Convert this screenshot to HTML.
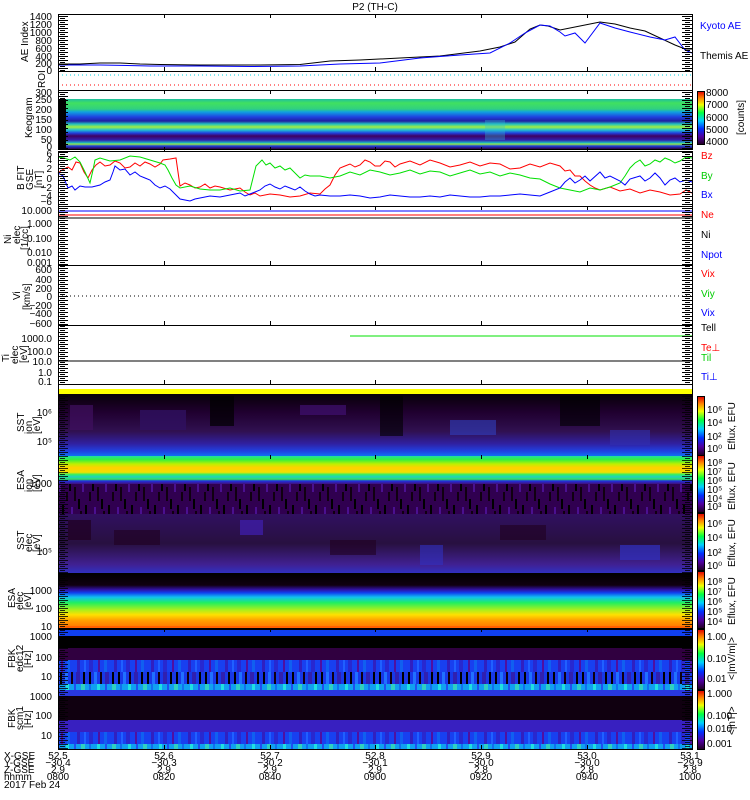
<!DOCTYPE html>
<html><head><meta charset="utf-8">
<style>
html,body{margin:0;padding:0;background:#fff;}
svg{display:block;font-family:"Liberation Sans",sans-serif;}
text{font-size:10px;}
</style></head>
<body>
<svg width="750" height="800" xmlns="http://www.w3.org/2000/svg">
<defs>
<linearGradient id="keo" x1="0" y1="0" x2="0" y2="1">
<stop offset="0" stop-color="#20c0a0"/><stop offset="0.08" stop-color="#40e060"/>
<stop offset="0.2" stop-color="#30d080"/><stop offset="0.26" stop-color="#10a0e0"/>
<stop offset="0.36" stop-color="#2040e0"/><stop offset="0.44" stop-color="#2020a0"/>
<stop offset="0.5" stop-color="#20c0c0"/><stop offset="0.56" stop-color="#a0f040"/>
<stop offset="0.62" stop-color="#20c0d0"/><stop offset="0.68" stop-color="#2040e0"/>
<stop offset="0.74" stop-color="#400060"/><stop offset="0.82" stop-color="#3020b0"/>
<stop offset="0.88" stop-color="#20c0c0"/><stop offset="0.9" stop-color="#a0f040"/>
<stop offset="0.94" stop-color="#2040e0"/><stop offset="1" stop-color="#300040"/>
</linearGradient>
<linearGradient id="esai" x1="0" y1="0" x2="0" y2="1">
<stop offset="0" stop-color="#20e0a0"/><stop offset="0.06" stop-color="#30f040"/>
<stop offset="0.14" stop-color="#c0f000"/><stop offset="0.2" stop-color="#ffd000"/>
<stop offset="0.28" stop-color="#f0e000"/><stop offset="0.32" stop-color="#30f060"/>
<stop offset="0.36" stop-color="#20d0c0"/><stop offset="0.4" stop-color="#30e060"/>
<stop offset="0.43" stop-color="#2030e0"/><stop offset="0.48" stop-color="#401080"/>
<stop offset="1" stop-color="#200030"/>
</linearGradient>
<linearGradient id="esae" x1="0" y1="0" x2="0" y2="1">
<stop offset="0" stop-color="#000"/><stop offset="0.22" stop-color="#100010"/>
<stop offset="0.3" stop-color="#3010a0"/><stop offset="0.36" stop-color="#1040f0"/>
<stop offset="0.44" stop-color="#10c0f0"/><stop offset="0.54" stop-color="#20f060"/>
<stop offset="0.66" stop-color="#a0f020"/><stop offset="0.76" stop-color="#ffe000"/>
<stop offset="0.86" stop-color="#ffa000"/><stop offset="1" stop-color="#ff7000"/>
</linearGradient>
<linearGradient id="sst" x1="0" y1="0" x2="0" y2="1">
<stop offset="0" stop-color="#080008"/><stop offset="0.3" stop-color="#200030"/>
<stop offset="0.6" stop-color="#301050"/><stop offset="0.8" stop-color="#3020a0"/>
<stop offset="0.92" stop-color="#2040e0"/><stop offset="1" stop-color="#1070f0"/>
</linearGradient>
<linearGradient id="sste" x1="0" y1="0" x2="0" y2="1">
<stop offset="0" stop-color="#301060"/><stop offset="0.5" stop-color="#281040"/>
<stop offset="0.85" stop-color="#402090"/><stop offset="1" stop-color="#3030c0"/>
</linearGradient>
<linearGradient id="cb" x1="0" y1="1" x2="0" y2="0">
<stop offset="0" stop-color="#200020"/><stop offset="0.15" stop-color="#5000a0"/>
<stop offset="0.3" stop-color="#0030ff"/><stop offset="0.45" stop-color="#00d0ff"/>
<stop offset="0.6" stop-color="#00ff40"/><stop offset="0.75" stop-color="#f0ff00"/>
<stop offset="0.88" stop-color="#ff8000"/><stop offset="1" stop-color="#e00000"/>
</linearGradient>
<pattern id="tkl" width="10" height="4" patternUnits="userSpaceOnUse">
<rect x="0" y="0" width="10" height="1" fill="#000"/><rect x="0" y="2" width="5" height="1" fill="#000"/>
</pattern>
<pattern id="tkr" width="10" height="4" patternUnits="userSpaceOnUse">
<rect x="0" y="0" width="10" height="1" fill="#000"/><rect x="5" y="2" width="5" height="1" fill="#000"/>
</pattern>
<pattern id="noise" width="23" height="37" patternUnits="userSpaceOnUse">
<rect width="23" height="37" fill="#300050"/>
<rect x="0" y="0" width="2" height="10" fill="#000"/><rect x="5" y="6" width="2" height="14" fill="#100010"/>
<rect x="9" y="18" width="2" height="10" fill="#000"/><rect x="13" y="3" width="2" height="8" fill="#4a1090"/>
<rect x="16" y="24" width="2" height="12" fill="#000"/><rect x="20" y="11" width="2" height="9" fill="#100010"/>
<rect x="2" y="26" width="2" height="8" fill="#4a1090"/><rect x="11" y="30" width="2" height="6" fill="#100010"/>
</pattern>
<pattern id="fbA" width="37" height="12" patternUnits="userSpaceOnUse">
<rect width="37" height="12" fill="#1840f0"/>
<rect x="3" width="3" height="12" fill="#3020c0"/><rect x="10" width="2" height="12" fill="#2060ff"/>
<rect x="15" width="4" height="12" fill="#2828d0"/><rect x="24" width="2" height="12" fill="#5010a0"/>
<rect x="30" width="3" height="12" fill="#1060f0"/>
</pattern>
<pattern id="fbB" width="29" height="12" patternUnits="userSpaceOnUse">
<rect width="29" height="12" fill="#1838e8"/>
<rect x="2" width="2" height="12" fill="#000"/><rect x="7" width="3" height="12" fill="#2070ff"/>
<rect x="13" width="2" height="12" fill="#100010"/><rect x="18" width="4" height="12" fill="#3020b0"/>
<rect x="25" width="2" height="12" fill="#000"/>
</pattern>
<pattern id="fbC" width="31" height="6" patternUnits="userSpaceOnUse">
<rect width="31" height="6" fill="#10a0f0"/>
<rect x="4" width="3" height="6" fill="#20e0e0"/><rect x="12" width="2" height="6" fill="#2050f0"/>
<rect x="19" width="4" height="6" fill="#30d0c0"/><rect x="27" width="2" height="6" fill="#1070f0"/>
</pattern>
</defs>
<text x="375" y="10" text-anchor="middle">P2 (TH-C)</text>

<!-- keogram -->
<rect x="58" y="99" width="634" height="50" fill="url(#keo)"/>
<rect x="58" y="99" width="8" height="50" fill="#000"/>
<rect x="485" y="120" width="20" height="20" fill="#30c0d0" opacity="0.35"/>
<!-- yellow bar -->
<rect x="58" y="389" width="634" height="5" fill="#ffff00"/>
<!-- SST ion -->
<rect x="58" y="394" width="634" height="62" fill="url(#sst)"/>
<rect x="70" y="405" width="23" height="25" fill="#401060" opacity="0.7"/>
<rect x="140" y="410" width="46" height="20" fill="#301060" opacity="0.8"/>
<rect x="210" y="396" width="24" height="30" fill="#000" opacity="0.7"/>
<rect x="300" y="405" width="46" height="10" fill="#401070" opacity="0.7"/>
<rect x="380" y="396" width="23" height="40" fill="#000" opacity="0.6"/>
<rect x="450" y="420" width="46" height="15" fill="#3040c0" opacity="0.6"/>
<rect x="560" y="396" width="40" height="30" fill="#000" opacity="0.6"/>
<rect x="610" y="430" width="40" height="15" fill="#3030b0" opacity="0.6"/>
<!-- ESA ion -->
<rect x="58" y="456" width="634" height="58" fill="url(#esai)"/>
<rect x="58" y="484" width="634" height="30" fill="url(#noise)"/>
<!-- SST elec -->
<rect x="58" y="514" width="634" height="59" fill="url(#sste)"/>
<rect x="68" y="520" width="23" height="20" fill="#200020" opacity="0.7"/>
<rect x="114" y="530" width="46" height="15" fill="#200020" opacity="0.6"/>
<rect x="240" y="520" width="23" height="15" fill="#4020b0" opacity="0.7"/>
<rect x="330" y="540" width="46" height="15" fill="#200020" opacity="0.6"/>
<rect x="420" y="545" width="23" height="20" fill="#3030c0" opacity="0.6"/>
<rect x="500" y="525" width="46" height="15" fill="#200020" opacity="0.6"/>
<rect x="620" y="545" width="40" height="15" fill="#3030c0" opacity="0.7"/>
<!-- ESA elec -->
<rect x="58" y="573" width="634" height="55" fill="url(#esae)"/>
<rect x="58" y="626" width="634" height="2" fill="#ff6000"/>
<!-- FBK edc12 -->
<rect x="58" y="628" width="634" height="62" fill="#000"/>
<rect x="58" y="630" width="634" height="6" fill="#1040f0"/>
<rect x="58" y="648" width="634" height="12" fill="#300040"/>
<rect x="58" y="660" width="634" height="12" fill="url(#fbA)"/>
<rect x="58" y="672" width="634" height="12" fill="url(#fbB)"/>
<rect x="58" y="684" width="634" height="6" fill="url(#fbC)"/>
<!-- FBK scm1 -->
<rect x="58" y="690" width="634" height="60" fill="#100010"/>
<rect x="58" y="690" width="634" height="6" fill="#2838e0"/>
<rect x="58" y="720" width="634" height="12" fill="#3820c0"/>
<rect x="58" y="732" width="634" height="12" fill="url(#fbA)"/>
<rect x="58" y="744" width="634" height="6" fill="url(#fbC)"/>

<!-- lines -->
<polyline fill="none" stroke="#000" points="58,64 80,64 100,63 120,63 140,64 160,64.5 200,65 230,65 260,65 300,64.5 330,61 360,60 400,58 440,56 480,51 500,47 515,42 530,29 540,25 548,26 560,30 580,26 600,22 615,24 630,28 645,31 660,38 675,45 685,49 692,49"/>
<polyline fill="none" stroke="#0000ff" points="58,65 100,65 150,66 200,66 250,66.5 300,66 340,64 380,63 420,58 460,55 490,53 510,43 525,33 540,25 550,26 560,32 565,36 575,33 585,43 600,23 615,28 630,32 650,37 665,40 675,37 685,50 692,53"/>
<line x1="58" y1="75" x2="692" y2="75" stroke="#00d0e0" stroke-dasharray="1 3"/>
<line x1="58" y1="85" x2="692" y2="85" stroke="#ff0000" stroke-dasharray="1 3"/>
<polyline fill="none" stroke="#ff0000" points="58,173 62,170 68,167 72,170 76,162 80,163 84,172 88,178 92,170 96,165 100,162 105,166 110,165 115,161 120,163 125,168 130,167 135,163 140,166 145,162 150,164 155,167 160,164 163,160 170,159 176,158 180,186 185,183 190,185 195,188 200,187 205,184 210,188 215,186 220,187 230,190 240,188 245,192 250,195 255,193 260,196 270,194 280,195 290,197 300,196 310,193 320,194 325,189 330,185 335,175 340,168 345,166 350,164 355,167 360,165 365,160 370,162 375,166 380,166 385,161 390,162 395,167 400,164 410,161 420,165 430,160 440,163 450,167 460,165 470,162 480,166 490,163 500,164 510,169 520,168 530,164 540,167 550,163 560,166 565,171 570,170 575,176 580,176 585,181 590,185 595,188 600,190 610,187 620,191 630,189 640,193 650,190 660,192 670,195 680,194 686,190 692,193"/>
<polyline fill="none" stroke="#00e000" points="58,157 64,158 70,160 75,157 80,162 85,172 90,183 93,170 95,160 100,158 110,161 120,160 130,156 140,157 150,160 160,163 165,165 168,170 172,178 176,185 180,188 190,186 200,189 210,190 220,190 230,188 240,191 250,190 253,178 256,166 262,160 266,165 270,163 275,168 280,166 285,170 290,168 295,173 300,178 305,175 310,176 320,176 330,178 340,176 350,172 360,175 370,170 380,172 390,175 400,173 410,170 420,174 430,171 440,172 450,176 460,173 470,170 480,174 490,172 500,176 510,173 520,175 530,178 540,179 550,184 560,188 570,190 580,192 590,188 600,190 610,187 620,183 625,176 630,168 635,163 640,160 645,166 650,164 655,160 660,162 665,158 670,160 675,163 680,161 686,157 692,158"/>
<polyline fill="none" stroke="#0000ff" points="58,173 63,176 68,188 72,186 75,190 80,186 85,187 92,187 100,185 105,182 110,180 113,172 115,166 120,170 125,169 130,175 135,172 140,176 145,178 150,180 155,185 160,188 165,186 170,189 175,194 180,199 185,200 190,201 195,199 200,198 210,196 220,197 230,195 240,193 245,196 250,194 255,192 260,190 265,186 270,184 275,187 280,189 285,186 290,188 295,190 300,187 305,191 310,194 315,196 320,195 330,196 340,196 350,195 360,196 370,198 380,197 390,195 400,196 410,197 420,197 430,196 440,197 450,195 460,196 470,197 480,197 490,196 500,196 510,195 520,194 530,195 540,196 550,192 560,188 565,182 570,178 575,183 580,180 585,176 590,181 600,172 605,178 610,176 620,181 625,185 630,179 640,176 645,181 650,178 655,173 660,178 665,185 670,180 675,178 680,182 686,180 692,182"/>
<line x1="58" y1="211" x2="692" y2="211" stroke="#0000ff"/>
<line x1="58" y1="215" x2="692" y2="215" stroke="#ff0000"/>
<line x1="58" y1="218" x2="692" y2="218" stroke="#000"/>
<line x1="58" y1="296" x2="692" y2="296" stroke="#000" stroke-dasharray="1 3"/>
<line x1="350" y1="336" x2="692" y2="336" stroke="#00e000"/>
<line x1="58" y1="361" x2="692" y2="361" stroke="#000"/>

<!-- frames -->
<g fill="none" stroke="#000" stroke-width="1">
<rect x="58.5" y="14.5" width="634" height="57"/>
<rect x="58.5" y="71.5" width="634" height="19"/>
<rect x="58.5" y="90.5" width="634" height="59"/>
<rect x="58.5" y="151.5" width="634" height="55"/>
<rect x="58.5" y="206.5" width="634" height="59"/>
<rect x="58.5" y="265.5" width="634" height="60"/>
<rect x="58.5" y="325.5" width="634" height="59"/>
<rect x="58.5" y="384.5" width="634" height="365"/>
</g>
<!-- y ticks -->
<g>
<rect x="58" y="15" width="10" height="56" fill="url(#tkl)"/><rect x="682" y="15" width="10" height="56" fill="url(#tkr)"/>
<rect x="58" y="91" width="10" height="58" fill="url(#tkl)"/><rect x="682" y="91" width="10" height="58" fill="url(#tkr)"/>
<rect x="58" y="152" width="10" height="54" fill="url(#tkl)"/><rect x="682" y="152" width="10" height="54" fill="url(#tkr)"/>
<rect x="58" y="207" width="10" height="58" fill="url(#tkl)"/><rect x="682" y="207" width="10" height="58" fill="url(#tkr)"/>
<rect x="58" y="266" width="10" height="59" fill="url(#tkl)"/><rect x="682" y="266" width="10" height="59" fill="url(#tkr)"/>
<rect x="58" y="326" width="10" height="58" fill="url(#tkl)"/><rect x="682" y="326" width="10" height="58" fill="url(#tkr)"/>
<rect x="58" y="396" width="10" height="353" fill="url(#tkl)" opacity="0.8"/><rect x="682" y="396" width="10" height="353" fill="url(#tkr)" opacity="0.8"/>
</g>
<path stroke="#000" fill="none" d="M164.5 14v4M270.5 14v4M375.5 14v4M481.5 14v4M587.5 14v4M164.5 71v-4M270.5 71v-4M375.5 71v-4M481.5 71v-4M587.5 71v-4M164.5 90v4M270.5 90v4M375.5 90v4M481.5 90v4M587.5 90v4M164.5 151v-4M270.5 151v-4M375.5 151v-4M481.5 151v-4M587.5 151v-4M164.5 206v4M270.5 206v4M375.5 206v4M481.5 206v4M587.5 206v4M164.5 265v-4M270.5 265v-4M375.5 265v-4M481.5 265v-4M587.5 265v-4M164.5 325v-4M270.5 325v-4M375.5 325v-4M481.5 325v-4M587.5 325v-4M164.5 384v-4M270.5 384v-4M375.5 384v-4M481.5 384v-4M587.5 384v-4M164.5 455v4M270.5 455v4M375.5 455v4M481.5 455v4M587.5 455v4M164.5 628v4M270.5 628v4M375.5 628v4M481.5 628v4M587.5 628v4M164.5 749v-4M270.5 749v-4M375.5 749v-4M481.5 749v-4M587.5 749v-4"/>

<!-- colorbars -->
<g stroke="#000" stroke-width="1">
<rect x="697.5" y="91.5" width="7" height="53" fill="url(#cb)"/>
<rect x="697.5" y="396.5" width="7" height="59" fill="url(#cb)"/>
<rect x="697.5" y="455.5" width="7" height="57" fill="url(#cb)"/>
<rect x="697.5" y="513.5" width="7" height="57" fill="url(#cb)"/>
<rect x="697.5" y="571.5" width="7" height="57" fill="url(#cb)"/>
<rect x="697.5" y="629.5" width="7" height="60" fill="url(#cb)"/>
<rect x="697.5" y="690.5" width="7" height="59" fill="url(#cb)"/>
</g>
<!-- left labels -->
<g font-size="10">
<text x="52" y="20" text-anchor="end">1400</text><text x="52" y="28" text-anchor="end">1200</text>
<text x="52" y="36" text-anchor="end">1000</text><text x="52" y="44" text-anchor="end">800</text>
<text x="52" y="52" text-anchor="end">600</text><text x="52" y="60" text-anchor="end">400</text>
<text x="52" y="67" text-anchor="end">200</text><text x="52" y="74" text-anchor="end">0</text>
<text transform="translate(28,62) rotate(-90)">AE Index</text>
<text transform="translate(45,88) rotate(-90)">ROI</text>
<text x="52" y="96" text-anchor="end">300</text><text x="52" y="103" text-anchor="end">250</text>
<text x="52" y="113" text-anchor="end">200</text><text x="52" y="123" text-anchor="end">150</text>
<text x="52" y="133" text-anchor="end">100</text><text x="52" y="143" text-anchor="end">50</text>
<text x="52" y="150" text-anchor="end">0</text>
<text transform="translate(32,138) rotate(-90)">Keogram</text>
<text x="52" y="157" text-anchor="end">6</text><text x="52" y="163" text-anchor="end">4</text>
<text x="52" y="172" text-anchor="end">2</text><text x="52" y="182" text-anchor="end">0</text>
<text x="52" y="191" text-anchor="end">−2</text><text x="52" y="199" text-anchor="end">−4</text>
<text x="52" y="205" text-anchor="end">−6</text>
<text transform="translate(24,190) rotate(-90)" font-size="9">B FIT</text>
<text transform="translate(33,190) rotate(-90)" font-size="8">GSE</text>
<text transform="translate(42,188) rotate(-90)" font-size="9">[nT]</text>
<text x="52" y="214" text-anchor="end">10.000</text><text x="52" y="227" text-anchor="end">1.000</text>
<text x="52" y="242" text-anchor="end">0.100</text><text x="52" y="256" text-anchor="end">0.010</text>
<text x="52" y="266" text-anchor="end">0.001</text>
<text transform="translate(11,244) rotate(-90)" font-size="9">Ni</text>
<text transform="translate(20,244) rotate(-90)" font-size="8">elec</text>
<text transform="translate(28,250) rotate(-90)" font-size="9">[1/cc]</text>
<text x="52" y="273" text-anchor="end">600</text><text x="52" y="283" text-anchor="end">400</text>
<text x="52" y="292" text-anchor="end">200</text><text x="52" y="300" text-anchor="end">0</text>
<text x="52" y="309" text-anchor="end">−200</text><text x="52" y="317" text-anchor="end">−400</text>
<text x="52" y="327" text-anchor="end">−600</text>
<text transform="translate(20,300) rotate(-90)" font-size="9">Vi</text>
<text transform="translate(30,310) rotate(-90)" font-size="9">[km/s]</text>
<text x="52" y="342" text-anchor="end">1000.0</text><text x="52" y="355" text-anchor="end">100.0</text>
<text x="52" y="365" text-anchor="end">10.0</text><text x="52" y="376" text-anchor="end">1.0</text>
<text x="52" y="385" text-anchor="end">0.1</text>
<text transform="translate(9,362) rotate(-90)" font-size="9">Ti</text>
<text transform="translate(18,364) rotate(-90)" font-size="8">elec</text>
<text transform="translate(27,363) rotate(-90)" font-size="9">[eV]</text>
<text x="52" y="416" text-anchor="end">10⁶</text><text x="52" y="445" text-anchor="end">10⁵</text>
<text transform="translate(24,432) rotate(-90)" font-size="9">SST</text>
<text transform="translate(32,434) rotate(-90)" font-size="8">ion</text>
<text transform="translate(40,434) rotate(-90)" font-size="8">[eV]</text>
<text x="52" y="487" text-anchor="end">1000</text>
<text transform="translate(24,490) rotate(-90)" font-size="9">ESA</text>
<text transform="translate(32,492) rotate(-90)" font-size="8">ion</text>
<text transform="translate(40,492) rotate(-90)" font-size="8">[eV]</text>
<text x="52" y="555" text-anchor="end">10⁵</text>
<text transform="translate(24,550) rotate(-90)" font-size="9">SST</text>
<text transform="translate(32,552) rotate(-90)" font-size="8">elec</text>
<text transform="translate(40,552) rotate(-90)" font-size="8">[eV]</text>
<text x="52" y="594" text-anchor="end">1000</text><text x="52" y="612" text-anchor="end">100</text>
<text x="52" y="630" text-anchor="end">10</text>
<text transform="translate(15,608) rotate(-90)" font-size="9">ESA</text>
<text transform="translate(23,610) rotate(-90)" font-size="8">elec</text>
<text transform="translate(31,610) rotate(-90)" font-size="8">[eV]</text>
<text x="52" y="640" text-anchor="end">1000</text><text x="52" y="661" text-anchor="end">100</text>
<text x="52" y="680" text-anchor="end">10</text>
<text transform="translate(15,668) rotate(-90)" font-size="9">FBK</text>
<text transform="translate(23,672) rotate(-90)" font-size="8">edc12</text>
<text transform="translate(31,668) rotate(-90)" font-size="8">[Hz]</text>
<text x="52" y="700" text-anchor="end">1000</text><text x="52" y="719" text-anchor="end">100</text>
<text x="52" y="739" text-anchor="end">10</text>
<text transform="translate(15,728) rotate(-90)" font-size="9">FBK</text>
<text transform="translate(23,730) rotate(-90)" font-size="8">scm1</text>
<text transform="translate(31,728) rotate(-90)" font-size="8">[Hz]</text>
</g>
<!-- right labels -->
<g font-size="9">
<text x="700" y="29" fill="#0000ff">Kyoto AE</text>
<text x="700" y="59">Themis AE</text>
<text x="706" y="96">8000</text><text x="706" y="108">7000</text><text x="706" y="121">6000</text>
<text x="706" y="133">5000</text><text x="706" y="145">4000</text>
<text transform="translate(744,135) rotate(-90)">[counts]</text>
<text x="701" y="159" fill="#ff0000">Bz</text>
<text x="701" y="179" fill="#00cc00">By</text>
<text x="701" y="198" fill="#0000ff">Bx</text>
<text x="701" y="218" fill="#ff0000">Ne</text>
<text x="701" y="238">Ni</text>
<text x="701" y="258" fill="#0000ff">Npot</text>
<text x="701" y="277" fill="#ff0000">Vix</text>
<text x="701" y="297" fill="#00cc00">Viy</text>
<text x="701" y="316" fill="#0000ff">Vix</text>
<text x="701" y="331">Tell</text>
<text x="701" y="351" fill="#ff0000">Te⊥</text>
<text x="701" y="361" fill="#00cc00">Til</text>
<text x="701" y="380" fill="#0000ff">Ti⊥</text>
<g font-size="8">
<text x="707" y="413">10⁶</text><text x="707" y="426">10⁴</text><text x="707" y="440">10²</text><text x="707" y="452">10⁰</text>
<text x="707" y="466">10⁸</text><text x="707" y="475">10⁷</text><text x="707" y="484">10⁶</text><text x="707" y="493">10⁵</text><text x="707" y="502">10⁴</text><text x="707" y="510">10³</text>
<text x="707" y="527">10⁶</text><text x="707" y="541">10⁴</text><text x="707" y="556">10²</text><text x="707" y="569">10⁰</text>
<text x="707" y="585">10⁸</text><text x="707" y="595">10⁷</text><text x="707" y="605">10⁶</text><text x="707" y="615">10⁵</text><text x="707" y="625">10⁴</text>
<text x="707" y="640">1.00</text><text x="707" y="662">0.10</text><text x="707" y="682">0.01</text>
<text x="707" y="697">1.000</text><text x="707" y="719">0.100</text><text x="707" y="732">0.010</text><text x="707" y="747">0.001</text>
<text transform="translate(735,450) rotate(-90)">Eflux, EFU</text>
<text transform="translate(735,510) rotate(-90)">Eflux, EFU</text>
<text transform="translate(735,567) rotate(-90)">Eflux, EFU</text>
<text transform="translate(735,625) rotate(-90)">Eflux, EFU</text>
<text transform="translate(735,680) rotate(-90)">&lt;|mV/m|&gt;</text>
<text transform="translate(735,735) rotate(-90)">&lt;|nT|&gt;</text>
</g>
</g>
<!-- bottom labels -->
<g font-size="9">
<text x="4" y="759">X-GSE</text><text x="4" y="766">Y-GSE</text><text x="4" y="773">Z-GSE</text>
<text x="4" y="780">hhmm</text><text x="4" y="788">2017 Feb 24</text>
</g>
<g font-size="9" text-anchor="middle">
<text x="58" y="759">52.5</text><text x="58" y="766">−30.4</text><text x="58" y="773">2.9</text><text x="58" y="780">0800</text>
<text x="164" y="759">52.6</text><text x="164" y="766">−30.3</text><text x="164" y="773">2.9</text><text x="164" y="780">0820</text>
<text x="270" y="759">52.7</text><text x="270" y="766">−30.2</text><text x="270" y="773">2.9</text><text x="270" y="780">0840</text>
<text x="375" y="759">52.8</text><text x="375" y="766">−30.1</text><text x="375" y="773">2.9</text><text x="375" y="780">0900</text>
<text x="481" y="759">52.9</text><text x="481" y="766">−30.0</text><text x="481" y="773">2.8</text><text x="481" y="780">0920</text>
<text x="587" y="759">53.0</text><text x="587" y="766">−30.0</text><text x="587" y="773">2.8</text><text x="587" y="780">0940</text>
<text x="690" y="759">53.1</text><text x="690" y="766">−29.9</text><text x="690" y="773">2.8</text><text x="690" y="780">1000</text>
</g>
</svg>
</body></html>
